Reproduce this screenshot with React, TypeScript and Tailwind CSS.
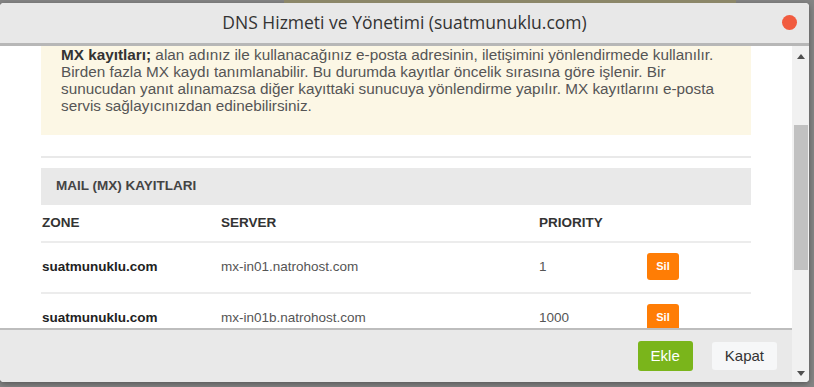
import React from "react";

const rows = [
  { zone: "suatmunuklu.com", server: "mx-in01.natrohost.com", priority: "1" },
  { zone: "suatmunuklu.com", server: "mx-in01b.natrohost.com", priority: "1000" },
];

export default function App() {
  return (
    <div className="w-[814px] h-[387px] overflow-hidden bg-[#858585] font-[family-name:'Liberation_Sans',Arial,sans-serif]">
      <div className="h-[3px] flex">
        <div className="ml-[284px] w-[452px] h-[3px] bg-[#8c8769]" />
      </div>
      <div className="w-[809px] h-[379px] flex flex-col bg-white rounded-[4px] overflow-hidden shadow-[0_2px_6px_rgba(0,0,0,0.35)]">
        <header className="relative h-[43px] shrink-0 flex items-center justify-center bg-[#e8e8e8] border-b-[3px] border-[#b7b7b7]">
          <h1 className="font-[family-name:'Open_Sans',sans-serif] text-[17.5px] text-[#333] leading-none">
            DNS Hizmeti ve Yönetimi (suatmunuklu.com)
          </h1>
          <span className="absolute right-[12px] top-[12px] w-[15px] h-[15px] rounded-full bg-[#f15b3f]" />
        </header>
        <div className="flex flex-1 min-h-0">
          <div className="w-[792px] flex flex-col">
            <div className="h-[282px] overflow-hidden px-[41px]">
              <div className="bg-[#fcf7e5] pl-[20px] h-[89px] text-[15.3px] leading-[17px] text-[#555] whitespace-nowrap">
                <b className="text-[#333]">MX kayıtları;</b> alan adınız ile kullanacağınız e-posta adresinin, iletişimini yönlendirmede kullanılır.
                <br />
                Birden fazla MX kaydı tanımlanabilir. Bu durumda kayıtlar öncelik sırasına göre işlenir. Bir
                <br />
                sunucudan yanıt alınamazsa diğer kayıttaki sunucuya yönlendirme yapılır. MX kayıtlarını e-posta
                <br />
                servis sağlayıcınızdan edinebilirsiniz.
              </div>
              <div className="mt-[21px] h-[2px] bg-[#e9e9e9]" />
              <div className="mt-[10px] h-[37px] flex items-center bg-[#e9e9e9] pl-[15px] text-[13.5px] font-bold text-[#444]">
                MAIL (MX) KAYITLARI
              </div>
              <div className="h-[38px] flex items-center text-[13.5px] font-bold text-[#333] border-b-2 border-[#ececec]">
                <div className="w-[180px] pl-[1px]">ZONE</div>
                <div className="w-[318px]">SERVER</div>
                <div className="w-[108px]">PRIORITY</div>
                <div className="flex-1" />
              </div>
              {rows.map((r, i) => (
                <div
                  key={i}
                  className="h-[51px] flex items-center text-[13.5px] border-b-2 border-[#ececec]"
                >
                  <div className="w-[180px] pl-[1px] font-bold text-[#222]">{r.zone}</div>
                  <div className="w-[318px] text-[#555]">{r.server}</div>
                  <div className="w-[108px] text-[#555]">{r.priority}</div>
                  <div className="flex-1 pb-[2px]">
                    <button className="w-[32px] h-[27px] rounded-[3px] bg-[#ff7d05] text-white text-[11px] font-bold">
                      Sil
                    </button>
                  </div>
                </div>
              ))}
            </div>
            <footer className="flex-1 flex items-center justify-end gap-[19px] pr-[15px] bg-[#e9e9e9] border-t-2 border-[#bdbdbd]">
              <button className="h-[30px] px-[13px] rounded-[3px] bg-[#7ab51b] text-white text-[15px]">
                Ekle
              </button>
              <button className="h-[28px] px-[13px] rounded-[3px] bg-[#f6f7f8] text-[#333] text-[15px]">
                Kapat
              </button>
            </footer>
          </div>
          <div className="w-[17px] flex flex-col items-center bg-[#f1f1f1]">
            <div className="h-[20px] flex items-center justify-center">
              <svg width="8" height="5" viewBox="0 0 8 5">
                <path d="M0 5 L4 0 L8 5 Z" fill="#505050" />
              </svg>
            </div>
            <div className="mt-[59px] w-[14px] h-[145px] bg-[#c1c1c1]" />
            <div className="flex-1" />
            <div className="h-[18px] flex items-center justify-center">
              <svg width="8" height="5" viewBox="0 0 8 5">
                <path d="M0 0 L8 0 L4 5 Z" fill="#505050" />
              </svg>
            </div>
          </div>
        </div>
      </div>
    </div>
  );
}
